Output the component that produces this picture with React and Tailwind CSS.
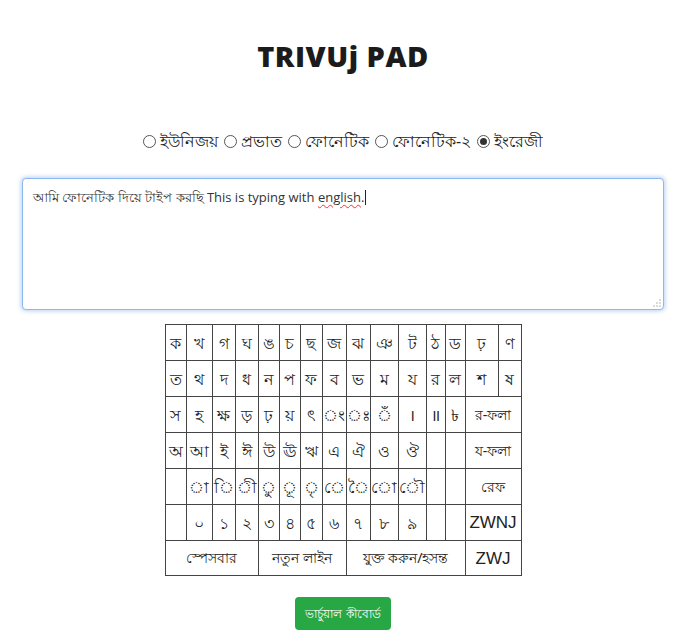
import React from 'react'

const colWidths = [21, 26, 23, 23, 21, 21, 22, 24, 24, 28, 28, 19, 20, 33, 23]

// each row: [label, colspan]
const rows = [
  ['ক', 'খ', 'গ', 'ঘ', 'ঙ', 'চ', 'ছ', 'জ', 'ঝ', 'ঞ', 'ট', 'ঠ', 'ড', 'ঢ়', 'ণ'].map((k) => [k, 1]),
  ['ত', 'থ', 'দ', 'ধ', 'ন', 'প', 'ফ', 'ব', 'ভ', 'ম', 'য', 'র', 'ল', 'শ', 'ষ'].map((k) => [k, 1]),
  [...['স', 'হ', 'ক্ষ', 'ড়', 'ঢ়', 'য়', 'ৎ', '◌ং', '◌ঃ', '◌ঁ', '।', '॥', '৳'].map((k) => [k, 1]), ['র-ফলা', 2]],
  [...['অ', 'আ', 'ই', 'ঈ', 'উ', 'ঊ', 'ঋ', 'এ', 'ঐ', 'ও', 'ঔ', '', ''].map((k) => [k, 1]), ['য-ফলা', 2]],
  [...['', '◌া', '◌ি', '◌ী', '◌ু', '◌ূ', '◌ৃ', '◌ে', '◌ৈ', '◌ো', '◌ৌ', '', ''].map((k) => [k, 1]), ['রেফ', 2]],
  [...['', '০', '১', '২', '৩', '৪', '৫', '৬', '৭', '৮', '৯', '', ''].map((k) => [k, 1]), ['ZWNJ', 2]],
  [['স্পেসবার', 4], ['নতুন লাইন', 4], ['যুক্ত করুন/হসন্ত', 5], ['ZWJ', 2]],
]

const layouts = ['ইউনিজয়', 'প্রভাত', 'ফোনেটিক', 'ফোনেটিক-২', 'ইংরেজী']

function Radio({ checked }) {
  return (
    <span className="inline-flex h-[13px] w-[13px] items-center justify-center rounded-full border border-[#555] bg-white">
      {checked && <span className="h-[7px] w-[7px] rounded-full bg-[#333]" />}
    </span>
  )
}

export default function App() {
  return (
    <div
      className="w-[686px] bg-white text-[#222]"
      style={{ fontFamily: '"Noto Sans", "Open Sans", sans-serif' }}
    >
      <h1 className="pt-[37px] text-center text-[29px] font-extrabold leading-[38px] tracking-[0.5px] text-[#1b1b1b]" style={{ fontFamily: '"Open Sans", sans-serif' }}>
        TRIVUj PAD
      </h1>

      <div className="mt-[54px] flex items-center justify-center gap-[6px] text-[16px] leading-[24px] text-[#222]">
        {layouts.map((l, i) => (
          <label key={l} className="flex items-center gap-[4px]">
            <Radio checked={i === 4} />
            <span>{l}</span>
          </label>
        ))}
      </div>

      <div className="relative mx-[22px] mt-[25px] h-[132px] rounded-[4px] border border-[#8db9ef] bg-white px-[10px] pt-[8px] shadow-[0_0_4px_1px_rgba(120,170,235,0.55)]">
        <p className="text-[13px] leading-[18px] text-[#333]" style={{ fontFamily: '"Open Sans", "Noto Sans", sans-serif' }}>
          আমি ফোনেটিক দিয়ে টাইপ করছি This is typing with{' '}
          <span className="underline decoration-wavy decoration-red-500 decoration-1 underline-offset-2">english</span>.
          <span className="ml-px inline-block h-[15px] w-px translate-y-[3px] bg-[#222]" />
        </p>
        <svg className="absolute bottom-[2px] right-[2px]" width="8" height="8" viewBox="0 0 8 8">
          <circle cx="7" cy="1" r="0.7" fill="#999" />
          <circle cx="7" cy="4" r="0.7" fill="#999" />
          <circle cx="4" cy="4" r="0.7" fill="#999" />
          <circle cx="7" cy="7" r="0.7" fill="#999" />
          <circle cx="4" cy="7" r="0.7" fill="#999" />
          <circle cx="1" cy="7" r="0.7" fill="#999" />
        </svg>
      </div>

      <div className="mt-[14px] flex justify-center">
        <table className="table-fixed border-collapse border border-[#444]" style={{ width: 357 }}>
          <colgroup>
            {colWidths.map((w, i) => (
              <col key={i} style={{ width: w }} />
            ))}
          </colgroup>
          <tbody>
            {rows.map((r, ri) => (
              <tr key={ri} className={ri === 6 ? 'h-[35px]' : 'h-[36px]'}>
                {r.map(([k, span], ci) => (
                  <td
                    key={ci}
                    colSpan={span}
                    className={`border border-[#444] p-0 text-center leading-none text-[#222] ${
                      /^[A-Z]+$/.test(k) ? 'text-[17px]' : span > 1 ? 'text-[14px]' : 'text-[16px]'
                    }`}
                    style={/^[A-Z]+$/.test(k) ? { fontFamily: '"Liberation Sans", sans-serif' } : undefined}
                  >
                    {k}
                  </td>
                ))}
              </tr>
            ))}
          </tbody>
        </table>
      </div>

      <div className="mt-[21px] flex justify-center pb-[14px]">
        <button className="h-[33px] rounded-[4px] bg-[#28a745] px-[10px] text-[12px] text-white">
          ভার্চুয়াল কীবোর্ড
        </button>
      </div>
    </div>
  )
}
